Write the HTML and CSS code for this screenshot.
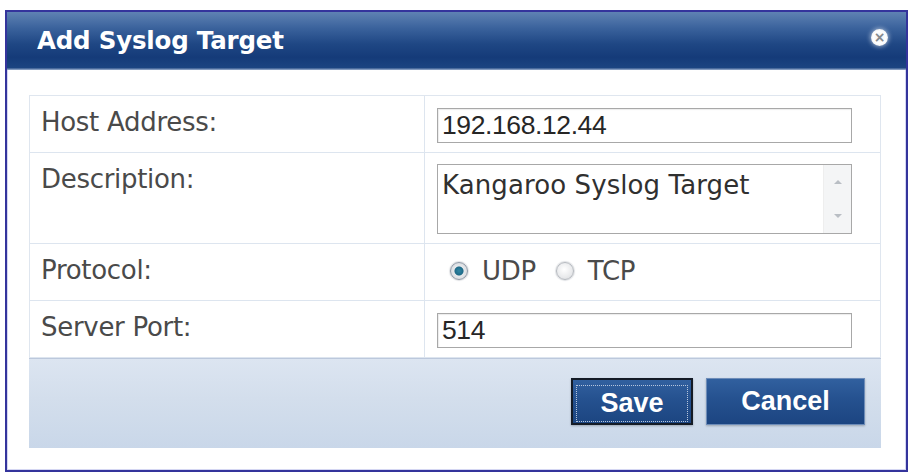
FILE: index.html
```html
<!DOCTYPE html>
<html lang="en">
<head>
<meta charset="utf-8">
<title>Add Syslog Target</title>
<link rel="stylesheet" href="styles.css">
</head>
<body>
<div class="dialog">
  <div class="dialog-header">
    <h1 class="dialog-title">Add Syslog Target</h1>
    <span class="close-btn" aria-label="Close"><span class="close-x">&times;</span></span>
  </div>
  <div class="dialog-body">
    <div class="form-table">
      <div class="form-row row-std">
        <div class="form-label">Host Address:</div>
        <div class="form-field"><div class="text-input">192.168.12.44</div></div>
      </div>
      <div class="form-row row-tall">
        <div class="form-label">Description:</div>
        <div class="form-field">
          <div class="text-area">
            <span class="area-text">Kangaroo Syslog Target</span>
            <span class="area-scroll">
              <svg width="10" height="8" viewBox="0 0 10 8"><path d="M1 6 L5 2 L9 6 Z" fill="#b9bec4"/></svg>
              <svg width="10" height="8" viewBox="0 0 10 8"><path d="M1 2 L5 6 L9 2 Z" fill="#b9bec4"/></svg>
            </span>
          </div>
        </div>
      </div>
      <div class="form-row row-std">
        <div class="form-label">Protocol:</div>
        <div class="form-field radio-field">
          <span class="radio checked"></span><span class="radio-label">UDP</span>
          <span class="radio"></span><span class="radio-label">TCP</span>
        </div>
      </div>
      <div class="form-row row-std">
        <div class="form-label">Server Port:</div>
        <div class="form-field"><div class="text-input">514</div></div>
      </div>
    </div>
    <div class="dialog-footer">
      <button class="btn btn-focus"><span class="btn-inner">Save</span></button>
      <button class="btn"><span class="btn-inner">Cancel</span></button>
    </div>
  </div>
</div>
</body>
</html>
```
FILE: styles.css
```css
html, body {
  margin: 0;
  padding: 0;
  background: #ffffff;
}

*, *::before, *::after {
  box-sizing: border-box;
}

.dialog {
  margin: 10px 0 0 5px;
  width: 903px;
  height: 462px;
  border: 2px solid #34349c;
  box-shadow: inset 0 0 0 1px #d4d6f2;
  background: #ffffff;
  display: flex;
  flex-direction: column;
}

.dialog-header {
  height: 58px;
  flex: none;
  display: flex;
  align-items: center;
  justify-content: space-between;
  padding: 0 18px 0 30px;
  background: linear-gradient(to bottom, #5f82b3 0%, #3a629c 28%, #1f4784 55%, #153b79 78%, #1b4481 96%, #9fb2d0 100%);
}

.dialog-title {
  margin: 0;
  font-family: "DejaVu Sans", Verdana, sans-serif;
  font-weight: bold;
  font-size: 24.5px;
  color: #ffffff;
  letter-spacing: -0.2px;
  padding-bottom: 2px;
}

.close-btn {
  width: 17px;
  height: 17px;
  border-radius: 50%;
  background: radial-gradient(circle, #eeeeee 0%, #ffffff 50%, #dde0e6 100%);
  box-shadow: 0 0 4px 1px rgba(255, 255, 255, 0.5);
  display: flex;
  align-items: center;
  justify-content: center;
  margin-bottom: 8px;
}

.close-x {
  font-family: "DejaVu Sans", sans-serif;
  font-weight: bold;
  font-size: 14px;
  line-height: 1;
  color: #85888e;
}

.dialog-body {
  flex: 1;
  padding: 25px 25px 0 22px;
  display: flex;
  flex-direction: column;
}

.form-table {
  border: 1px solid #dfe6ef;
  border-bottom: none;
}

.form-row {
  display: grid;
  grid-template-columns: 395px 1fr;
  border-bottom: 1px solid #dde5ef;
}

.row-std { height: 57px; }
.row-tall { height: 91px; }

.form-label {
  border-right: 1px solid #dde5ef;
  padding: 11px 0 0 11px;
  font-family: "DejaVu Sans", Verdana, sans-serif;
  font-size: 26px;
  line-height: 30px;
  color: #4a4a4a;
  letter-spacing: -0.3px;
}

.form-field {
  padding: 12px 28px 0 12px;
}

.text-input {
  height: 35px;
  border: 1px solid #a8a8a8;
  box-shadow: inset 1px 1px 1px rgba(0, 0, 0, 0.08);
  background: #ffffff;
  font-family: "Liberation Sans", Arial, sans-serif;
  font-size: 26.5px;
  line-height: 33px;
  color: #262626;
  padding-left: 4px;
  letter-spacing: -0.4px;
}

.text-area {
  margin-top: -1px;
  height: 70px;
  border: 1px solid #a8a8a8;
  background: #ffffff;
  display: flex;
  justify-content: space-between;
}

.area-text {
  padding: 3px 0 0 4px;
  font-family: "DejaVu Sans", Verdana, sans-serif;
  font-size: 26px;
  line-height: 34px;
  color: #303030;
  letter-spacing: 0.1px;
}

.area-scroll {
  width: 28px;
  background: #f4f5f6;
  border-left: 1px solid #eeeeee;
  display: flex;
  flex-direction: column;
  justify-content: space-between;
  align-items: center;
  padding: 13px 0 13px;
}

.radio-field {
  display: flex;
  align-items: center;
  padding: 0 0 2px 25px;
}

.radio {
  width: 18px;
  height: 18px;
  border-radius: 50%;
  border: 1px solid #b5b9bf;
  background: radial-gradient(circle at 45% 40%, #ffffff 0%, #e9eaec 60%, #d4d6d9 100%);
  box-shadow: 0 0 1px 1px rgba(160, 165, 175, 0.35);
}

.radio.checked {
  border-color: #8f99a6;
  background: radial-gradient(circle at 50% 50%, #2f86a3 0%, #1e6a88 36%, #e6e8eb 44%, #cfd3d8 100%);
}

.radio-label {
  font-family: "DejaVu Sans", Verdana, sans-serif;
  font-size: 26px;
  color: #4a4a4a;
  margin: 0 20px 0 14px;
  letter-spacing: -0.3px;
}

.dialog-footer {
  height: 90px;
  flex: none;
  border-top: 1px solid #bcc8dc;
  background: linear-gradient(to bottom, #dce5f1 0%, #d3deec 45%, #c9d7e9 100%);
  display: flex;
  justify-content: flex-end;
  align-items: flex-start;
  gap: 13px;
  padding: 19px 16px 0 0;
}

.btn {
  height: 47px;
  padding: 0;
  border: 1px solid #6d8cb8;
  background: linear-gradient(to bottom, #31609f 0%, #25518f 45%, #1c4581 100%);
  box-shadow: 0 1px 2px rgba(0, 0, 0, 0.25);
  font-family: "Liberation Sans", Arial, sans-serif;
  font-weight: bold;
  font-size: 27px;
  color: #ffffff;
  width: 159px;
}

.btn-focus {
  width: 122px;
  border: 2px solid #141b26;
}

.btn-inner {
  display: flex;
  align-items: center;
  justify-content: center;
  height: 100%;
}

.btn-focus .btn-inner {
  margin: 3px 3px 0;
  height: calc(100% - 6px);
  border: 1px dotted #b7c6dc;
}
```
